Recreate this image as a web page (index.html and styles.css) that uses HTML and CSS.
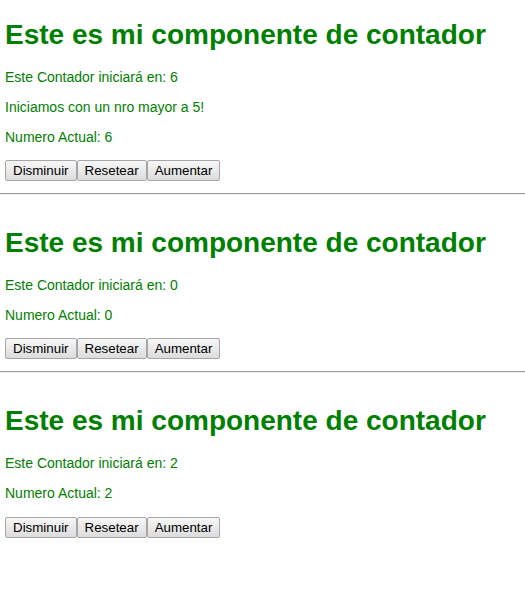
FILE: index.html
```html
<!DOCTYPE html>
<html lang="es">
<head>
<meta charset="utf-8">
<link rel="stylesheet" href="styles.css">
</head>
<body>
<div class="counter">
  <h1 class="title">Este es mi componente de contador</h1>
  <p class="text">Este Contador iniciará en: 6</p>
  <p class="text">Iniciamos con un nro mayor a 5!</p>
  <p class="text">Numero Actual: 6</p>
  <div class="actions"><button class="btn">Disminuir</button><button class="btn">Resetear</button><button class="btn">Aumentar</button></div>
</div>
<hr class="sep">
<div class="counter">
  <h1 class="title">Este es mi componente de contador</h1>
  <p class="text">Este Contador iniciará en: 0</p>
  <p class="text">Numero Actual: 0</p>
  <div class="actions"><button class="btn">Disminuir</button><button class="btn">Resetear</button><button class="btn">Aumentar</button></div>
</div>
<hr class="sep">
<div class="counter">
  <h1 class="title">Este es mi componente de contador</h1>
  <p class="text">Este Contador iniciará en: 2</p>
  <p class="text">Numero Actual: 2</p>
  <div class="actions"><button class="btn">Disminuir</button><button class="btn">Resetear</button><button class="btn">Aumentar</button></div>
</div>
</body>
</html>
```
FILE: styles.css
```css
html, body {
  margin: 0;
  padding: 0;
  background: #fff;
}
body {
  font-family: "Liberation Sans", Arial, sans-serif;
  font-size: 14px;
  color: #008000;
}
.counter {
  padding: 19px 5px 12px;
}
.counter + .sep + .counter {
  padding-top: 20px;
}
.title {
  font-size: 28px;
  font-weight: bold;
  margin: 0 0 18px;
  line-height: 32px;
}
.text {
  margin: 14px 0;
  line-height: 16px;
}
.actions {
  display: flex;
  margin-top: 15px;
}
.btn {
  font-family: "Liberation Sans", Arial, sans-serif;
  font-size: 13.33px;
  color: #000;
  height: 21px;
  padding: 0 7px;
  border: 1px solid #a6a6a6;
  border-radius: 2px;
  background: linear-gradient(#f7f7f7, #dcdcdc);
}
.sep {
  margin: 0 0 12px;
  border: 0;
  border-top: 1px solid #9a9a9a;
  border-bottom: 1px solid #eeeeee;
  height: 0;
}
.counter:last-child .actions {
  margin-top: 16px;
}
.counter:last-child {
  padding-top: 21px;
}
```
